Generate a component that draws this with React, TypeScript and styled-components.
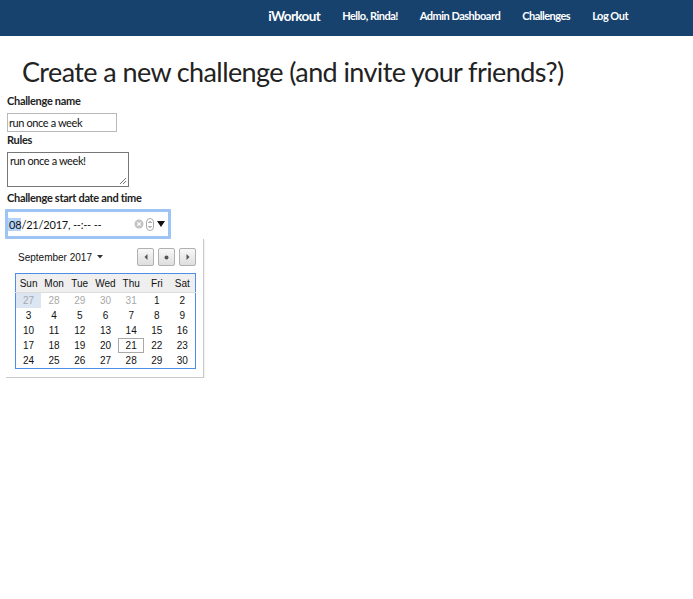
import React from "react";
import styled, { createGlobalStyle } from "styled-components";

const Global = createGlobalStyle`
  html, body { margin: 0; padding: 0; background: #fff; }
  body { font-family: Lato, "Noto Sans", sans-serif; color: #333; }
`;

const NavBar = styled.nav`
  height: 36px;
  box-sizing: border-box;
  padding: 0 65px 5px 0;
  background: #17426e;
  display: flex;
  align-items: center;
  justify-content: flex-end;
  gap: 22px;
`;

const Brand = styled.span`
  color: #fff;
  font-size: 13.5px;
  font-weight: 700;
  letter-spacing: -0.6px;
`;

const NavLink = styled.span`
  color: #fff;
  font-size: 11px;
  font-weight: 700;
  letter-spacing: -0.5px;
`;

const Main = styled.main`
  padding: 0 7px;
`;

const Title = styled.h1`
  margin: 18px 0 4px 15px;
  font-size: 27px;
  font-weight: 400;
  color: #222;
  line-height: 36px;
  letter-spacing: -0.6px;
`;

const Label = styled.div`
  font-size: 11px;
  font-weight: 700;
  color: #222;
  line-height: 14px;
  letter-spacing: -0.3px;
`;

const TextBox = styled.div`
  margin-top: 5px;
  margin-bottom: 1px;
  width: 107px;
  height: 17px;
  border: 1px solid #b9b9b9;
  font-size: 11px;
  line-height: 17px;
  padding-left: 1px;
  color: #111;
  letter-spacing: -0.4px;
`;

const TextArea = styled.div`
  position: relative;
  margin-top: 5px;
  margin-bottom: 4px;
  width: 118px;
  height: 32px;
  border: 1px solid #777;
  font-size: 11px;
  line-height: 14px;
  padding: 1px 0 0 2px;
  color: #111;
  letter-spacing: -0.4px;
`;

const Grip = styled.svg`
  position: absolute;
  right: 1px;
  bottom: 1px;
`;

const DateWrap = styled.div`
  margin-left: -2px;
  margin-top: 4px;
  width: 200px;
`;

const DateField = styled.div`
  width: 160px;
  height: 24px;
  border: 3px solid #9ec3f5;
  border-radius: 1px;
  display: flex;
  align-items: center;
  font-size: 11px;
  color: #111;
  letter-spacing: -0.2px;
`;

const Sel = styled.span`
  background: #b4d3f8;
  padding-left: 1px;
`;

const Controls = styled.div`
  margin-left: auto;
  display: flex;
  align-items: center;
  gap: 2px;
  margin-right: 2px;
`;

const Popup = styled.div`
  margin-left: 1px;
  width: 198px;
  height: 139px;
  border-right: 1px solid #c9c9c9;
  border-bottom: 1px solid #c9c9c9;
  box-shadow: 1px 1px 1px rgba(0, 0, 0, 0.05);
  box-sizing: border-box;
  padding: 9px 0 0 9px;
  font-family: "Liberation Sans", Arial, sans-serif;
`;

const PopHead = styled.div`
  display: flex;
  align-items: center;
  height: 18px;
  width: 181px;
  margin-bottom: 7px;
`;

const Month = styled.span`
  font-size: 10px;
  color: #111;
  margin-left: 3px;
  display: flex;
  align-items: center;
  gap: 5px;
`;

const Buttons = styled.div`
  margin-left: auto;
  display: flex;
  gap: 4px;
`;

const NavBtn = styled.div`
  width: 15px;
  height: 16px;
  border: 1px solid #b0b0b0;
  border-radius: 2px;
  background: linear-gradient(#f8f8f8, #dedede);
  display: flex;
  align-items: center;
  justify-content: center;
`;

const Grid = styled.table`
  border: 1px solid #4d8fe8;
  border-collapse: collapse;
  width: 181px;
  font-size: 10px;
  color: #111;
  table-layout: fixed;
`;

const Th = styled.th`
  background: #efefef;
  font-weight: 400;
  height: 18px;
  padding: 0;
  border-bottom: 1px solid #dcdcdc;
  text-align: center;
`;

const Td = styled.td<{ $muted?: boolean; $hl?: boolean; $today?: boolean }>`
  height: 15px;
  padding: 0;
  text-align: center;
  color: ${(p) => (p.$muted ? "#a8a8a8" : "#111")};
  background: ${(p) => (p.$hl ? "#dce6f3" : "transparent")};
  box-shadow: ${(p) => (p.$today ? "inset 0 0 0 1px #a9a9a9" : "none")};
`;

const days = ["Sun", "Mon", "Tue", "Wed", "Thu", "Fri", "Sat"];
const weeks = [
  [27, 28, 29, 30, 31, 1, 2],
  [3, 4, 5, 6, 7, 8, 9],
  [10, 11, 12, 13, 14, 15, 16],
  [17, 18, 19, 20, 21, 22, 23],
  [24, 25, 26, 27, 28, 29, 30],
];

export default function App() {
  return (
    <>
      <Global />
      <NavBar>
        <Brand>iWorkout</Brand>
        <NavLink>Hello, Rinda!</NavLink>
        <NavLink>Admin Dashboard</NavLink>
        <NavLink>Challenges</NavLink>
        <NavLink>Log Out</NavLink>
      </NavBar>
      <Main>
        <Title>Create a new challenge (and invite your friends?)</Title>
        <Label>Challenge name</Label>
        <TextBox>run once a week</TextBox>
        <Label>Rules</Label>
        <TextArea>
          run once a week!
          <Grip width="8" height="8" viewBox="0 0 8 8">
            <path d="M7 1 L1 7 M7 4 L4 7" stroke="#777" strokeWidth="1" />
          </Grip>
        </TextArea>
        <Label>Challenge start date and time</Label>
        <DateWrap>
          <DateField>
            <Sel>08</Sel>/21/2017, --:-- --
            <Controls>
              <svg width="10" height="10" viewBox="0 0 10 10">
                <circle cx="5" cy="5" r="4.5" fill="#c4c4c4" />
                <path d="M3.3 3.3 L6.7 6.7 M6.7 3.3 L3.3 6.7" stroke="#fff" strokeWidth="1.2" />
              </svg>
              <svg width="8" height="13" viewBox="0 0 8 13">
                <rect x="0.5" y="0.5" width="7" height="12" rx="3.5" fill="#fff" stroke="#aaa" />
                <path d="M2.5 5 L4 3.5 L5.5 5 M2.5 8 L4 9.5 L5.5 8" stroke="#444" fill="none" strokeWidth="0.8" />
              </svg>
              <svg width="10" height="8" viewBox="0 0 10 8">
                <path d="M1 1 L9 1 L5 7 Z" fill="#111" />
              </svg>
            </Controls>
          </DateField>
          <Popup>
            <PopHead>
              <Month>
                September 2017
                <svg width="6" height="4" viewBox="0 0 6 4">
                  <path d="M0 0 L6 0 L3 3.5 Z" fill="#333" />
                </svg>
              </Month>
              <Buttons>
                <NavBtn>
                  <svg width="4" height="6" viewBox="0 0 4 6"><path d="M3.5 0 L3.5 6 L0.5 3 Z" fill="#555" /></svg>
                </NavBtn>
                <NavBtn>
                  <svg width="5" height="5" viewBox="0 0 5 5"><circle cx="2.5" cy="2.5" r="2" fill="#555" /></svg>
                </NavBtn>
                <NavBtn>
                  <svg width="4" height="6" viewBox="0 0 4 6"><path d="M0.5 0 L0.5 6 L3.5 3 Z" fill="#555" /></svg>
                </NavBtn>
              </Buttons>
            </PopHead>
            <Grid>
              <thead>
                <tr>
                  {days.map((d) => (
                    <Th key={d}>{d}</Th>
                  ))}
                </tr>
              </thead>
              <tbody>
                {weeks.map((w, wi) => (
                  <tr key={wi}>
                    {w.map((d, di) => (
                      <Td
                        key={di}
                        $muted={wi === 0 && di < 5}
                        $hl={wi === 0 && di === 0}
                        $today={wi === 3 && di === 4}
                      >
                        {d}
                      </Td>
                    ))}
                  </tr>
                ))}
              </tbody>
            </Grid>
          </Popup>
        </DateWrap>
      </Main>
    </>
  );
}
